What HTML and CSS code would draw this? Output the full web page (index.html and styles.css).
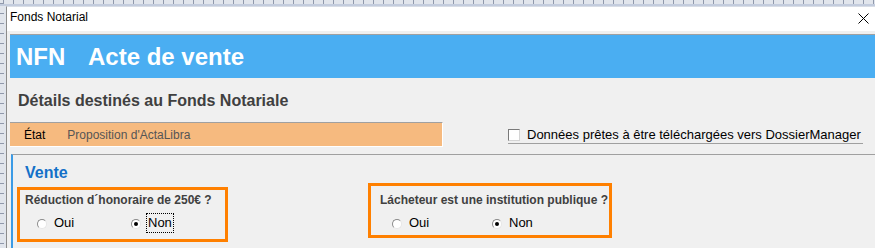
FILE: index.html
```html
<!DOCTYPE html>
<html lang="fr">
<head>
    <meta charset="UTF-8">
    <title>Fonds Notarial</title>
    <link rel="stylesheet" href="styles.css">
</head>
<body>
    <div class="window">
        <div class="titlebar">
            <span class="titlebar-text">Fonds Notarial</span>
            <svg class="close" width="11" height="11" viewBox="0 0 11 11">
                <path d="M0.5 0.5 L10.5 10.5 M10.5 0.5 L0.5 10.5" stroke="#000" stroke-width="1" fill="none"/>
            </svg>
        </div>
        <div class="content">
            <div class="banner">
                <span class="banner-code">NFN</span>
                <span class="banner-title">Acte de vente</span>
            </div>
            <h2 class="subtitle">Détails destinés au Fonds Notariale</h2>
            <div class="status-row">
                <div class="status">
                    <span class="status-label">État</span>
                    <span class="status-value">Proposition d'ActaLibra</span>
                </div>
                <label class="ready">
                    <span class="checkbox"></span>
                    Données prêtes à être téléchargées vers DossierManager
                </label>
            </div>
            <div class="section">
                <h3 class="section-title">Vente</h3>
                <div class="questions">
                    <div class="question question-first">
                        <div class="question-text">Réduction d´honoraire de 250€ ?</div>
                        <div class="choices">
                            <span class="choice"><span class="radio"></span><span class="choice-text">Oui</span></span>
                            <span class="choice"><span class="radio checked"></span><span class="choice-text focused">Non</span></span>
                        </div>
                    </div>
                    <div class="question question-second">
                        <div class="question-text">Lácheteur est une institution publique ?</div>
                        <div class="choices">
                            <span class="choice"><span class="radio"></span><span class="choice-text">Oui</span></span>
                            <span class="choice"><span class="radio checked"></span><span class="choice-text">Non</span></span>
                        </div>
                    </div>
                </div>
            </div>
        </div>
    </div>
</body>
</html>
```

FILE: styles.css
```css
html, body {
    height: 248px;
    overflow: hidden;
}
body {
    margin: 0;
    padding: 6px 0 0 6px;
    box-sizing: border-box;
    font-family: 'Liberation Sans', Arial, sans-serif;
    /* ruler strips behind the window */
    background:
        linear-gradient(#c3ccdd, #c3ccdd) left 0 top 4px / 100% 2px no-repeat,
        repeating-linear-gradient(90deg, #8f98ab 0 1px, transparent 1px 10px) left 3px top 0 / 100% 4px no-repeat,
        repeating-linear-gradient(180deg, #8f98ab 0 1px, transparent 1px 10px) left 0 top 3px / 4px 100% no-repeat,
        #e1e5ec;
}
.window {
    height: 100%;
    box-sizing: border-box;
    overflow: hidden;
    border-left: 1px solid #8c8c8c;
    border-top: 1px solid #d8dde6;
    background: #f0f0f0;
}
.titlebar {
    display: flex;
    justify-content: space-between;
    align-items: flex-start;
    background: #fff;
    height: 24px;
    padding-left: 3px;
    box-sizing: border-box;
}
.titlebar-text {
    font-size: 12px;
    line-height: 20px;
    color: #000;
}
.close {
    margin: 6px 6px 0 0;
}
.content {
    padding: 3px 0 0 3px;
}
.banner {
    display: flex;
    height: 44px;
    box-sizing: border-box;
    border-top: 1px solid #a0a0a0;
    background: #4aaef2;
    color: #fff;
    font-size: 24px;
    font-weight: bold;
    line-height: 43px;
    padding-left: 6px;
}
.banner-code {
    width: 72px;
}
.subtitle {
    margin: 13px 0 0 8px;
    font-size: 16px;
    line-height: 20px;
    color: #404040;
}
.status-row {
    display: flex;
    align-items: flex-start;
    margin-top: 11px;
}
.status {
    width: 433px;
    box-sizing: border-box;
    background: #f6ba7f;
    border-top: 1px solid #a0a0a0;
    border-right: 1px solid #fff;
    border-bottom: 1px solid #fff;
    padding: 2px 0 0 14px;
    height: 25px;
    font-size: 12px;
    line-height: 21px;
}
.status-label {
    display: inline-block;
    width: 40px;
    color: #000;
}
.status-value {
    color: #555;
}
.ready {
    display: flex;
    align-items: center;
    margin: 5px 0 0 65px;
    width: 355px;
    height: 15px;
    padding-bottom: 1px;
    border-bottom: 1px solid #a0a0a0;
    font-size: 13px;
    color: #000;
}
.checkbox {
    width: 12px;
    height: 12px;
    box-sizing: border-box;
    border: 1px solid #7a7a7a;
    border-right-color: #d4d4d4;
    border-bottom-color: #d4d4d4;
    background: #fff;
    margin-right: 7px;
}
.section {
    margin: 7px 0 0 1px;
    height: 94px;
    box-sizing: border-box;
    border-top: 1px solid #a0a0a0;
    border-left: 2px solid #3b9be6;
    padding: 8px 0 0 4px;
}
.section-title {
    margin: 0 0 0 8px;
    font-size: 16px;
    line-height: 20px;
    color: #1470c8;
}
.questions {
    display: flex;
    align-items: flex-start;
    gap: 140px;
}
.question {
    border: 3px solid #ff8000;
    box-sizing: border-box;
    font-size: 12px;
}
.question-first {
    width: 211px;
    margin-top: 4px;
    padding: 3px 0 7px 5px;
}
.question-second {
    width: 244px;
    padding: 7px 0 3px 9px;
}
.question-text {
    font-weight: bold;
    color: #404040;
    line-height: 15px;
}
.choices {
    display: flex;
    margin-top: 6px;
    padding-left: 12px;
    font-size: 13px;
    line-height: 18px;
    color: #000;
}
.choice {
    display: flex;
    align-items: center;
    width: 100px;
}
.radio {
    width: 10px;
    height: 10px;
    box-sizing: border-box;
    border-radius: 50%;
    border: 1px solid #8a8a8a;
    border-right-color: #e6e6e6;
    border-bottom-color: #e6e6e6;
    background: #fff;
    margin: 1px 7px 0 0;
    position: relative;
}
.radio.checked::after {
    content: "";
    position: absolute;
    left: 2px;
    top: 2px;
    width: 4px;
    height: 4px;
    border-radius: 50%;
    background: #000;
}
.choice-text.focused {
    outline: 1px dotted #000;
    outline-offset: 0;
    margin-left: -1px;
    padding: 0 1px;
}
```
